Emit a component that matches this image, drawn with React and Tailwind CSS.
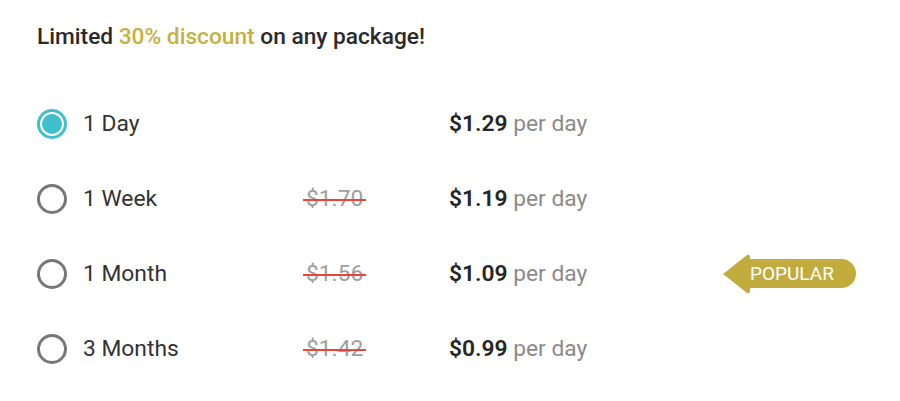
import React, { useState } from 'react';

const plans = [
  { id: 'day', label: '1 Day', old: null, price: '$1.29' },
  { id: 'week', label: '1 Week', old: '$1.70', price: '$1.19' },
  { id: 'month', label: '1 Month', old: '$1.56', price: '$1.09', popular: true },
  { id: '3months', label: '3 Months', old: '$1.42', price: '$0.99' },
];

const Radio = ({ checked }) => (
  <span
    className={`flex h-[30px] w-[30px] items-center justify-center rounded-full border-[3px] ${
      checked ? 'border-[#3fbfcb]' : 'border-[#777777]'
    }`}
  >
    {checked && <span className="h-[20px] w-[20px] rounded-full bg-[#3fbfcb]" />}
  </span>
);

const PopularBadge = () => (
  <div className="flex items-center">
    <svg width="27" height="40" viewBox="0 0 27 40" className="-mr-px">
      <path d="M0 20 L24 1 Q27 0 27 3 L27 37 Q27 40 24 39 Z" fill="#c2ac3e" />
    </svg>
    <div className="flex h-[29px] items-center rounded-r-full bg-[#c2ac3e] pl-[1px] pr-[22px] text-[19px] leading-none text-white">
      POPULAR
    </div>
  </div>
);

export default function App() {
  const [selected, setSelected] = useState('day');

  return (
    <div className="h-[401px] w-[900px] bg-white pl-[37px] pt-[23px] font-['Roboto','Liberation_Sans',sans-serif] text-[#2a2a2a]">
      <h2 className="text-[22.7px] font-medium leading-[28px]">
        Limited <span className="text-[#c5b040]">30% discount</span> on any package!
      </h2>

      <div className="mt-[35px]">
        {plans.map(plan => (
          <div
            key={plan.id}
            onClick={() => setSelected(plan.id)}
            className="grid h-[75px] cursor-pointer grid-cols-[266px_146px_274px_auto] items-center"
          >
            <div className="flex items-center gap-[16px]">
              <Radio checked={selected === plan.id} />
              <span className="pt-[2px] text-[22.8px] text-[#333333]">{plan.label}</span>
            </div>
            <div className="pt-[2px] text-[22.8px] text-[#9e9e9e]">
              {plan.old && (
                <span className="relative px-[3px]">
                  {plan.old}
                  <span className="absolute left-0 right-0 top-1/2 h-[2px] bg-[#e8453c]" />
                </span>
              )}
            </div>
            <div className="pt-[2px] text-[22.8px]">
              <span className="font-semibold text-[#262626]">{plan.price}</span>{' '}
              <span className="text-[#8a8a8a]">per day</span>
            </div>
            <div>{plan.popular && <PopularBadge />}</div>
          </div>
        ))}
      </div>
    </div>
  );
}
